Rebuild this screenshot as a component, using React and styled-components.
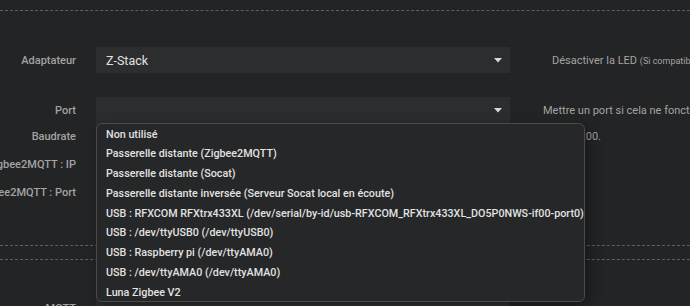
import React from 'react';
import styled, { createGlobalStyle } from 'styled-components';

const GlobalStyle = createGlobalStyle`
	html, body {
		margin: 0;
		padding: 0;
		background: #232425;
		overflow: hidden;
	}
	body {
		font-family: Roboto, 'Liberation Sans', sans-serif;
	}
`;

const options = [
	'Non utilisé',
	'Passerelle distante (Zigbee2MQTT)',
	'Passerelle distante (Socat)',
	'Passerelle distante inversée (Serveur Socat local en écoute)',
	'USB : RFXCOM RFXtrx433XL (/dev/serial/by-id/usb-RFXCOM_RFXtrx433XL_DO5P0NWS-if00-port0)',
	'USB : /dev/ttyUSB0 (/dev/ttyUSB0)',
	'USB : Raspberry pi (/dev/ttyAMA0)',
	'USB : /dev/ttyAMA0 (/dev/ttyAMA0)',
	'Luna Zigbee V2',
];

const Arrow = () => (
	<svg width='8' height='5' viewBox='0 0 8 5'>
		<path d='M0 0 L8 0 L4 4.5 Z' fill='#d8d8d8' />
	</svg>
);

const App = () => {
	return (
		<Page>
			<GlobalStyle />
			<Divider top={10} />
			<Form>
				<Row top={36}>
					<Label>Adaptateur</Label>
					<Select>
						<span>Z-Stack</span>
						<Arrow />
					</Select>
					<Hint indent={9}>
						Désactiver la LED <small>(Si compatible avec le matériel)</small>
					</Hint>
				</Row>
				<Row top={24}>
					<Label>Port</Label>
					<Field>
						<Select>
							<span />
							<Arrow />
						</Select>
						<Menu>
							{options.map((opt) => (
								<MenuItem key={opt}>{opt}</MenuItem>
							))}
						</Menu>
					</Field>
					<Hint>Mettre un port si cela ne fonctionne pas en automatique</Hint>
				</Row>
				<Row top={0}>
					<Label>Baudrate</Label>
					<Input />
					<Hint indent={18}>115200.</Hint>
				</Row>
				<Row top={2}>
					<Label>Zigbee2MQTT : IP</Label>
					<Input />
				</Row>
				<Row top={2}>
					<Label>Zigbee2MQTT : Port</Label>
					<Input />
				</Row>
			</Form>
			<Divider top={40} />
			<Divider top={13} />
			<Form>
				<Row top={35}>
					<Label>Adresse serveur MQTT</Label>
					<Input />
				</Row>
			</Form>
		</Page>
	);
};

const Page = styled.div`
	width: 690px;
	height: 306px;
	overflow: hidden;
	display: flex;
	flex-direction: column;
`;

const Divider = styled.div`
	margin-top: ${(p) => p.top}px;
	border-top: 1px dashed #5e5f60;
	height: 0;
	flex-shrink: 0;
`;

const Form = styled.div`
	display: flex;
	flex-direction: column;
`;

const Row = styled.div`
	margin-top: ${(p) => p.top}px;
	display: flex;
	align-items: center;
	height: 26px;
	flex-shrink: 0;
`;

const Label = styled.div`
	width: 76px;
	flex-shrink: 0;
	display: flex;
	justify-content: flex-end;
	white-space: nowrap;
	font-size: 11px;
	font-weight: 500;
	color: #a3a3a3;
	margin-right: 20px;
`;

const Field = styled.div`
	position: relative;
	width: 414px;
	height: 26px;
	flex-shrink: 0;
`;

const Select = styled.div`
	width: 414px;
	height: 26px;
	box-sizing: border-box;
	flex-shrink: 0;
	background: #2c2d2e;
	display: flex;
	align-items: center;
	justify-content: space-between;
	padding: 0 8px 0 10px;
	font-size: 12.5px;
	color: #e0e0e0;
	svg {
		display: block;
	}
`;

const Input = styled.div`
	width: 414px;
	height: 26px;
	flex-shrink: 0;
	background: #2c2d2e;
`;

const Hint = styled.div`
	margin-left: ${(p) => 33 + (p.indent || 0)}px;
	white-space: nowrap;
	font-size: 11px;
	color: #a3a3a3;
	small {
		font-size: 9px;
	}
`;

const Menu = styled.div`
	position: absolute;
	top: 26px;
	left: 0;
	width: 489px;
	height: 179px;
	box-sizing: border-box;
	padding-top: 0.5px;
	background: #262728;
	border: 1px solid #4a4b4c;
	border-radius: 6px;
	box-shadow: 4px 4px 14px rgba(0, 0, 0, 0.35);
	z-index: 10;
`;

const MenuItem = styled.div`
	height: 19.75px;
	line-height: 19.75px;
	padding-left: 9px;
	font-size: 10.75px;
	font-weight: 500;
	color: #e2e2e2;
	white-space: nowrap;
`;

export default App;
